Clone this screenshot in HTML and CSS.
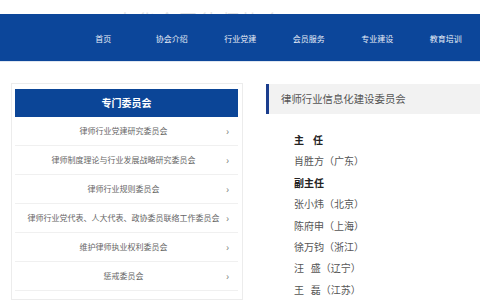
FILE: index.html
```html
<!DOCTYPE html>
<html lang="zh-CN">
<head>
  <meta charset="UTF-8">
  <meta name="viewport" content="width=device-width, initial-scale=1.0">
  <title>专门委员会</title>
  <link rel="stylesheet" href="styles.css">
</head>
<body>
  <!-- 顶部标题（只露出下半部分） -->
  <div class="top-title">
    <span>中华全国律师协会</span>
  </div>

  <!-- 导航 -->
  <div class="nav">
    <ul>
      <li>首页</li>
      <li>协会介绍</li>
      <li>行业党建</li>
      <li>会员服务</li>
      <li>专业建设</li>
      <li>教育培训</li>
    </ul>
  </div>

  <div class="main">
    <!-- 左侧菜单 -->
    <div class="side-box">
      <div class="side-title">专门委员会</div>
      <ul class="side-list">
        <li>律师行业党建研究委员会<span class="arrow">›</span></li>
        <li>律师制度理论与行业发展战略研究委员会<span class="arrow">›</span></li>
        <li>律师行业规则委员会<span class="arrow">›</span></li>
        <li>律师行业党代表、人大代表、政协委员联络工作委员会<span class="arrow">›</span></li>
        <li>维护律师执业权利委员会<span class="arrow">›</span></li>
        <li>惩戒委员会<span class="arrow">›</span></li>
      </ul>
    </div>

    <!-- 右侧内容 -->
    <div class="content">
      <div class="content-title">律师行业信息化建设委员会</div>
      <div class="members">
        <p class="role">主&nbsp;&nbsp;&nbsp;&nbsp;任</p>
        <p>肖胜方（广东）</p>
        <p class="role">副主任</p>
        <p>张小炜（北京）</p>
        <p>陈府申（上海）</p>
        <p>徐万钧（浙江）</p>
        <p>汪&nbsp;&nbsp;&nbsp;盛（辽宁）</p>
        <p>王&nbsp;&nbsp;&nbsp;磊（江苏）</p>
      </div>
    </div>
  </div>
</body>
</html>
```

FILE: styles.css
```css
body {
  margin: 0;
  background-color: #fff;
  font-family: "Noto Sans CJK SC", "Noto Sans", sans-serif;
  color: #555;
  overflow: hidden;
}
ul {
  list-style: none;
  margin: 0;
  padding: 0;
}
p {
  margin: 0;
}
/* 顶部 */
.top-title {
  height: 14px;
  overflow: hidden;
  display: flex;
  flex-direction: column;
  justify-content: flex-end;
  padding-left: 116px;
}
.top-title span {
  font-size: 18px;
  line-height: 22px;
  letter-spacing: 3px;
  color: #e2e2e2;
  margin-bottom: -17px;
}
/* 导航 */
.nav {
  height: 47px;
  background-color: #0c469a;
  border-bottom: 1px solid #dfe6f0;
}
.nav ul {
  display: flex;
  height: 100%;
  margin-left: 69px;
  align-items: center;
}
.nav li {
  flex: 1;
  text-align: center;
  font-size: 8px;
  color: #e6edf7;
  padding-top: 2px;
}
/* 主体 */
.main {
  display: flex;
  padding: 21px 0 0 11px;
  gap: 23px;
}
.side-box {
  width: 232px;
  flex-shrink: 0;
  box-sizing: border-box;
  border: 1px solid #ececec;
  padding: 5px 4px 0 3px;
}
.side-title {
  height: 28px;
  line-height: 28px;
  background-color: #0b4597;
  color: #fff;
  font-size: 10px;
  font-weight: bold;
  text-align: center;
}
.side-list li {
  position: relative;
  height: 29px;
  line-height: 28px;
  box-sizing: border-box;
  border-bottom: 1px solid #f0f0f0;
  text-align: center;
  font-size: 8px;
  color: #666;
  padding-right: 6px;
}
.side-list .arrow {
  position: absolute;
  right: 9px;
  top: 0;
  font-size: 10px;
  color: #777;
}
.content {
  flex: 1;
  padding-top: 1px;
}
.content-title {
  height: 30px;
  line-height: 30px;
  background-color: #f2f2f2;
  border-left: 3px solid #1b3d8d;
  padding-left: 12px;
  font-size: 10.4px;
  color: #555;
}
.members {
  padding: 15px 0 0 28px;
}
.members p {
  font-size: 10px;
  line-height: 21.4px;
  color: #555;
}
.members .role {
  font-weight: bold;
  color: #222;
}
```
